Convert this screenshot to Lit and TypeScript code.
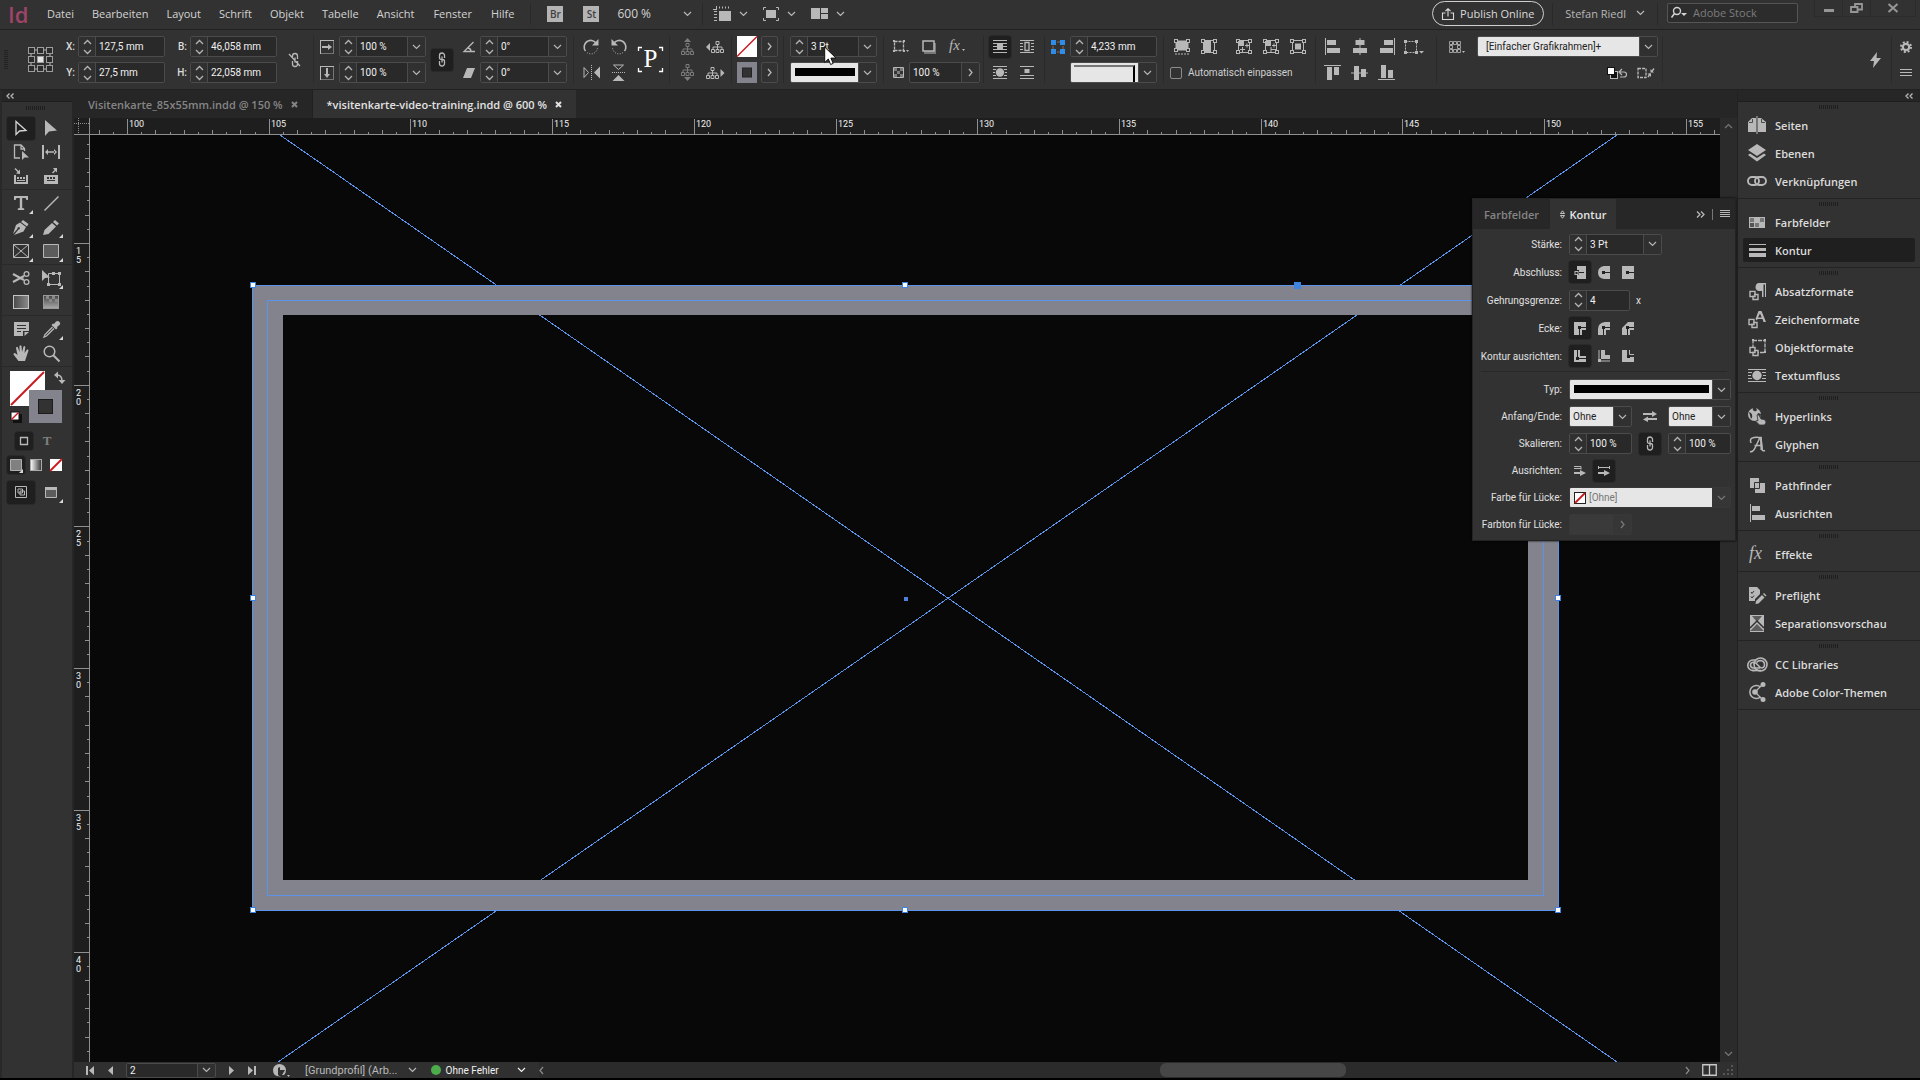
import { LitElement, html, css, svg, nothing } from "lit";
import { customElement } from "lit/decorators.js";

/* ---------- icon set: [width, height, drawing] ---------- */
const node = (x: number, y: number) => svg`<rect x=${x} y=${y} width="3" height="3" fill="#323232" stroke="currentColor"/>`;
const corners = (w: number, h: number) => svg`${node(0.5, 0.5)}${node(w - 3.5, 0.5)}${node(0.5, h - 3.5)}${node(w - 3.5, h - 3.5)}`;
const lines = (w: number, ys: number[]) => ys.map((y) => svg`<rect x="0" y=${y} width=${w} height="1"/>`);

const ICONS: Record<string, [number, number, unknown]> = {
  chevron: [9, 6, svg`<path d="M1 1l3.5 3.500L8 1" fill="none" stroke="currentColor" stroke-width="1.200"/>`],
  chevronRight: [5, 9, svg`<path d="M1 1l3 3.500L1 8" fill="none" stroke="currentColor" stroke-width="1.300"/>`],
  chevronLeft: [5, 9, svg`<path d="M4 1L1 4.500L4 8" fill="none" stroke="currentColor" stroke-width="1.300"/>`],
  chevronUp: [9, 6, svg`<path d="M1 5l3.500-3.500L8 5" fill="none" stroke="currentColor" stroke-width="1.200"/>`],
  spin: [9, 16, svg`<path d="M1 5l3.500-3.500L8 5M1 11l3.500 3.500L8 11" fill="none" stroke="currentColor" stroke-width="1.300"/>`],
  collapse: [8, 6, svg`<path d="M3.500.500L1 3l2.500 2.500M7.500.500L5 3l2.500 2.500" fill="none" stroke="currentColor" stroke-width="1.300"/>`],
  expand: [9, 7, svg`<path d="M1 .500L4 3.500 1 6.500M5 .500L8 3.500 5 6.500" fill="none" stroke="currentColor" stroke-width="1.300"/>`],
  close: [7, 7, svg`<path d="M1 1l5 5M6 1L1 6" stroke="currentColor" stroke-width="2"/>`],
  windowClose: [12, 10, svg`<path d="M1.500 1l9 8M10.500 1l-9 8" stroke="currentColor" stroke-width="2"/>`],
  minimize: [10, 10, svg`<rect x="0" y="6" width="10" height="3"/>`],
  restore: [13, 10, svg`<path d="M1 4h6.500v5H1zM5 3.500V1h7v5.500H8" fill="none" stroke="currentColor" stroke-width="1.800"/>`],
  rulerView: [18, 15, svg`<path d="M6 5h12v10H6z"/><path d="M6.500 .500v2M9.500 .500v2M12.500 .500v2M15.500 .500v2M1 5.500h3M1 8.500h3M1 11.500h3M1 14.500h3M3.500 0v4M0 3.500h4" stroke="currentColor" fill="none"/>`],
  screenMode: [16, 14, svg`<path d="M3 3h10v8H3z"/><path d="M.500 3V.500H3M13 .500h2.500V3M15.500 11v2.500H13M3 13.500H.500V11" fill="none" stroke="currentColor"/>`],
  arrange: [17, 11, svg`<path d="M0 0h9v11H0zM10 0h7v5h-7zM10 6h7v5h-7z"/>`],
  share: [12, 12, svg`<path d="M3.500 5H.500v6.500h11V5h-3M6 8.500V1M3.500 3L6 .800 8.500 3" fill="none" stroke="currentColor" stroke-width="1.100"/>`],
  search: [17, 11, svg`<circle cx="6" cy="4" r="3.500" fill="none" stroke="currentColor" stroke-width="1.400"/><path d="M3.500 6.500L.500 10.500" stroke="currentColor" stroke-width="1.600"/><path d="M10 6h6l-3 3z"/>`],
  refPoint: [25, 25, svg`<path d="M3 3h19v19H3z" fill="none" stroke="currentColor" stroke-width="1"/>${[0.5, 9.5, 18.5].map((x) => [0.5, 9.5, 18.5].map((y) => svg`<rect x=${x} y=${y} width="6" height="6" fill=${x === 9.5 && y === 9.5 ? "#e4e4e4" : "#2b2b2b"} stroke="#9d9d9d"/>`))}`],
  unlink: [13, 16, svg`<path d="M4.500 7V4a2.500 2.500 0 0 1 5 0v3M4.500 9v3a2.500 2.500 0 0 0 5 0V9M7 5.500v5M1 2l11 12" fill="none" stroke="currentColor" stroke-width="1.300"/>`],
  link: [8, 15, svg`<path d="M1.500 6V3.500a2.500 2.500 0 0 1 5 0V6M1.500 9v2.500a2.500 2.500 0 0 0 5 0V9M4 4.500v6M1.500 6q0 1.500 2.500 1.500T6.500 9" fill="none" stroke="currentColor" stroke-width="1.300"/>`],
  scaleX: [14, 14, svg`<path d="M.500.500h13v13H.500z" fill="none" stroke="currentColor" stroke-dasharray="1 1"/><path d="M.500 0v14M0 .500h14" stroke="currentColor"/><path d="M2 6h6V4l4 3-4 3V8H2z"/>`],
  scaleY: [14, 14, svg`<path d="M.500.500h13v13H.500z" fill="none" stroke="currentColor" stroke-dasharray="1 1"/><path d="M.500 0v14M0 .500h14" stroke="currentColor"/><path d="M6 2h2v6h2l-3 4-3-4h2z"/>`],
  angle: [12, 12, svg`<path d="M10.500 1L1 10.500h11M5 7q3 .500 3 3.500" fill="none" stroke="currentColor" stroke-width="1.300"/>`],
  shear: [12, 10, svg`<path d="M4 0h8L8 10H0z"/>`],
  rotateCw: [17, 16, svg`<path d="M2.500 12A6.500 6.500 0 0 1 13 4" fill="none" stroke="currentColor" stroke-width="1.600"/><path d="M15.500 0v6.500H9z"/><path d="M4 13.500a6.500 6.500 0 0 0 10.500-5" fill="none" stroke="currentColor" stroke-dasharray="1 1.500"/>`],
  rotateCcw: [17, 16, svg`<path d="M14.500 12A6.500 6.500 0 0 0 4 4" fill="none" stroke="currentColor" stroke-width="1.600"/><path d="M1.500 0v6.500H8z"/><path d="M13 13.500a6.500 6.500 0 0 1-10.500-5" fill="none" stroke="currentColor" stroke-dasharray="1 1.500"/>`],
  flipH: [17, 15, svg`<path d="M1 2.500v10l4.500-5z" fill="none" stroke="currentColor"/><path d="M8.500 0v15" stroke="currentColor" stroke-dasharray="1 1"/><path d="M17 1.500v12l-6-6z"/>`],
  flipV: [13, 17, svg`<path d="M1.500 1h10L6.500 5.500z" fill="none" stroke="currentColor"/><path d="M0 8.500h13" stroke="currentColor" stroke-dasharray="1 1"/><path d="M.500 17h12l-6-6z"/>`],
  pFrame: [25, 25, svg`<path d="M.500 4V.500H4M21 .500h3.500V4M24.500 21v3.500H21M4 24.500H.500V21" fill="none" stroke="#fff" stroke-width="1.300"/><text x="12.500" y="20" text-anchor="middle" class="serif" fill="#fff">P</text>`],
  treeUp: [13, 17, svg`<path d="M3 4l3.500-4L10 4z"/><path d="M5 5.500h3v3H5zM.500 13.500h3v3h-3zM5 13.500h3v3H5zM9.500 13.500h3v3h-3zM6.500 8.500v5M2 13.500V11h9v2.500" fill="none" stroke="currentColor"/>`],
  treeDown: [13, 17, svg`<path d="M3 13l3.500 4L10 13z"/><path d="M5 .500h3v3H5zM.500 8.500h3v3h-3zM5 8.500h3v3H5zM9.500 8.500h3v3h-3zM6.500 3.500v5M2 8.500V6h9v2.500" fill="none" stroke="currentColor"/>`],
  treePrev: [19, 12, svg`<path d="M4 2v8L0 6z"/><path d="M10 .500h3v3h-3zM5.500 8.500h3v3h-3zM10 8.500h3v3h-3zM14.500 8.500h3v3h-3zM11.500 3.500v5M7 8.500V6h9v2.500" fill="none" stroke="currentColor"/>`],
  treeNext: [19, 12, svg`<path d="M14.500 2v8l4-4z"/><path d="M5 .500h3v3H5zM.500 8.500h3v3h-3zM5 8.500h3v3H5zM9.500 8.500h3v3h-3zM6.500 3.500v5M2 8.500V6h9v2.500" fill="none" stroke="currentColor"/>`],
  none: [20, 21, svg`<rect width="20" height="21" fill="#fff"/><path d="M0 20.500L20 .500" stroke="#c8191e" stroke-width="1.500"/>`],
  strokeSwatch: [20, 21, svg`<rect width="20" height="21" fill="#82838c"/><rect x="5.500" y="6" width="9" height="9" fill="#323232" stroke="#222"/>`],
  cornerOpt: [16, 13, svg`<path d="M1.500 1.500h9v9h-9z" fill="none" stroke="currentColor" stroke-width="1.300" stroke-dasharray="3 1"/><path d="M0 0h2v2H0zM10 0h2v2h-2zM0 10h2v2H0zM10 10h2v2h-2zM13 10h3l-1.500 2z"/>`],
  shadow: [14, 14, svg`<rect x="2" y="3" width="12" height="11" fill="#777"/><rect x="1" y="1" width="11" height="10" fill="#323232" stroke="currentColor" stroke-width="1.500"/>`],
  fx: [17, 15, svg`<text x="0" y="11" class="fx">fx</text><path d="M13 10h3l-1.500 2z"/>`],
  checker: [11, 11, svg`<path d="M.500.500h10v10H.500z" fill="none" stroke="currentColor"/><path d="M1 1h3v3H1zM7 1h3v3H7zM4 4h3v3H4zM1 7h3v3H1zM7 7h3v3H7z" fill="#7c7c7c"/>`],
  wrapNone: [14, 14, svg`${lines(14, [0, 3, 6, 9, 12])}<path d="M4 3h6v7H4z"/>`],
  wrapBox: [14, 14, svg`${lines(14, [0, 12])}<path d="M0 3h3v1H0zM0 6h3v1H0zM0 9h3v1H0zM11 3h3v1h-3zM11 6h3v1h-3zM11 9h3v1h-3z"/><path d="M5 2.500h4v8H5z" fill="none" stroke="currentColor" stroke-width="1.300"/>`],
  wrapShape: [14, 14, svg`${lines(14, [0, 12])}<path d="M0 3h3v1H0zM0 6h2v1H0zM0 9h3v1H0zM11 3h3v1h-3zM12 6h2v1h-2zM11 9h3v1h-3z"/><circle cx="7" cy="6.500" r="4.200"/>`],
  wrapJump: [14, 14, svg`${lines(14, [0, 9, 12])}<path d="M4.500 3h5v4h-5z"/>`],
  blueCorners: [14, 14, svg`<path d="M6 2h3M6 12h3M2 6v3M12 6v3" stroke="#8a6a5a"/><path d="M0 0h5v5H0zM9 0h5v5H9zM0 9h5v5H0zM9 9h5v5H9z" fill="#2f8de8"/>`],
  fit1: [16, 16, svg`<path d="M1.500 1.500h13v10h-13z" fill="#b8b8b8"/>${corners(16, 13)}<path d="M1 15h14" stroke="currentColor" stroke-dasharray="2 1"/>`],
  fit2: [16, 15, svg`<path d="M2.500 1.500h11v12h-11z" fill="none" stroke="currentColor"/><path d="M2 1h8v13H2z"/>${corners(16, 15)}`],
  fit3: [16, 15, svg`<path d="M2.500 1.500h11v12h-11z" fill="none" stroke="currentColor"/>${corners(16, 15)}<path d="M2 2h6v5H2z"/><path d="M4 10.500h5M6.500 8v5M9 6.500h4M11 4.500v4" stroke="currentColor"/>`],
  fit4: [16, 15, svg`<path d="M2.500 1.500h11v12h-11z" fill="none" stroke="currentColor"/>${corners(16, 15)}<path d="M2 2h6v5H2z"/><path d="M8 10.500h5M8 8v5M9 6.500h4M11 4.500v4" stroke="currentColor"/>`],
  fit5: [16, 15, svg`<path d="M2.500 1.500h11v12h-11z" fill="none" stroke="currentColor"/>${corners(16, 15)}<path d="M5 4.500h6v6H5z"/>`],
  alignL: [16, 17, svg`<path d="M0 0h1v17H0zM2 2h9v5H2zM2 10h13v5H2z"/>`],
  alignC: [14, 17, svg`<path d="M6.500 0h1v17h-1zM2.500 2h9v5h-9zM0 10h14v5H0z"/>`],
  alignR: [16, 17, svg`<path d="M15 0h1v17h-1zM5 2h9v5H5zM1 10h13v5H1z"/>`],
  alignT: [17, 15, svg`<path d="M0 0h17v1H0zM3 2h5v13H3zM10 2h5v8h-5z"/>`],
  alignM: [17, 14, svg`<path d="M0 6.500h17v1H0zM3 0h5v14H3zM10 3h5v8h-5z"/>`],
  alignB: [17, 15, svg`<path d="M0 14h17v1H0zM3 0h5v13H3zM10 5h5v8h-5z"/>`],
  spacing: [20, 14, svg`<path d="M1.500 1.500h11v11h-11z" fill="none" stroke="currentColor" stroke-dasharray="2 1"/><path d="M0 0h3v3H0zM11 0h3v3h-3zM0 11h3v3H0zM11 11h3v3h-3zM15 11h5l-2.500 2.500z"/>`],
  objStyle: [16, 12, svg`<path d="M2.500 2.500h7v7h-7z" fill="none" stroke="currentColor" stroke-width="1.500"/><path d="M.500.500h3v3h-3zM4.500.500h3v3h-3zM8.500.500h3v3h-3zM.500 8.500h3v3h-3zM8.500 8.500h3v3h-3zM4.500 8.500h3v3h-3zM.500 4.500h3v3h-3zM8.500 4.500h3v3h-3z" fill="#323232" stroke="currentColor" stroke-width=".8"/><path d="M13 10h3l-1.500 2z"/>`],
  clearOver: [20, 12, svg`<rect x="3.500" y="4.500" width="7" height="7" fill="#111" stroke="currentColor"/><rect x=".5" y=".5" width="7" height="7" fill="#fff" stroke="#111"/><path d="M13 5h4q2.500 0 2.500 2.500T17 10h-4M15 2l-3 3 3 3" fill="none" stroke="currentColor" stroke-width="1.200"/>`],
  redefine: [17, 12, svg`<path d="M1 1.500h8v9H1z" fill="none" stroke="currentColor" stroke-width="1.300" stroke-dasharray="3 1"/><path d="M11 10l2.500-3.500M14.500 5L17 1.500" stroke="currentColor" stroke-width="1.300"/><path d="M10.500 6.500h3.500v3.500zM13.500 2v3.500H17z"/>`],
  bolt: [11, 16, svg`<path d="M7 0L0 9h4l-1 7 8-10H6.500z"/>`],
  gear: [12, 12, svg`<circle cx="6" cy="6" r="3.200" fill="none" stroke="currentColor" stroke-width="2.200"/><circle cx="6" cy="6" r="5" fill="none" stroke="currentColor" stroke-width="2" stroke-dasharray="2 1.930"/>`],
  menu: [12, 8, svg`${lines(12, [0, 3, 6])}`],
  panelMenu: [10, 8, svg`${lines(10, [0, 2, 4, 6])}`],
  selection: [12, 16, svg`<path d="M1 1.500v13l3.500-3.500L11 10.500z" fill="none" stroke="#d6d6d6" stroke-width="1.300"/>`],
  direct: [12, 16, svg`<path d="M0 0v16l4-4.500 8-1z"/>`],
  pageTool: [16, 16, svg`<path d="M7 14H1.500V1H8l3.500 3.500V7M8 1v4h3.500" fill="none" stroke="currentColor" stroke-width="1.300"/><path d="M9 7v9l2.500-2.500H16z"/>`],
  gap: [18, 14, svg`<path d="M0 0h2v14H0zM16 0h2v14h-2zM3 7l3-3v6zM15 7l-3-3v6zM5 6.300h8v1.400H5z"/>`],
  collect: [14, 16, svg`<path d="M0 7h2v7h10V7h2v9H0z"/><path d="M3 9h2v2H3zM6 9h2v2H6zM9 9h2v2H9zM3 12h8v1H3zM6 6V1.500L4.500 3 1.500 0 .500 1l3 3L2 5.500z"/>`],
  place: [14, 16, svg`<path d="M0 7h14v9H0z"/><path d="M3 9h2v2H3zM6 9h2v2H6zM9 9h2v2H9zM3 12h8v1H3z" fill="#323232"/><path d="M13 0v4.500L11.500 3 9 5.500 8 4.500 10.500 2 9 0z"/>`],
  type: [14, 14, svg`<path d="M0 0h14v4h-1.500L11.500 2H8.200v10l2 .6V14H3.800v-1.400l2-.6V2H2.500L1.500 4H0z"/>`],
  line: [15, 15, svg`<path d="M.500 14.500l14-14" stroke="currentColor" stroke-width="1.500"/>`],
  pen: [16, 15, svg`<path d="M10 0l5.500 4-1.500 2.500-6-4.500zM7 2.500L13 7l-2.500 4.500L1 15l4.500-5.500a1.200 1.200 0 1 0-1-.800L0 14 3 5z"/>`],
  pencil: [16, 15, svg`<path d="M12 0l4 3.500-2 2L10 2zM9 3l4 3.500L5.500 14 0 15l1.500-5z"/>`],
  frame: [16, 14, svg`<path d="M.500.500h15v13H.500zM.500.500l15 13M15.500.500l-15 13" fill="none" stroke="currentColor"/>`],
  rect: [16, 14, svg`<path d="M.500.500h15v13H.500z" fill="#5c5c5c" stroke="currentColor"/>`],
  scissors: [17, 14, svg`<path d="M0 3l11 6M0 11l11-6" stroke="currentColor" stroke-width="2"/><circle cx="13.500" cy="3" r="2.400" fill="none" stroke="currentColor" stroke-width="1.300"/><circle cx="13.500" cy="11" r="2.400" fill="none" stroke="currentColor" stroke-width="1.300"/>`],
  transform: [19, 16, svg`<path d="M6.500 3.500h11v11h-11z" fill="none" stroke="currentColor"/><path d="M5 13h3v3H5zM16 2h3v3h-3zM16 13h3v3h-3zM10 2h3v3h-3z"/><path d="M0 0v11l3-3 5-.5z"/>`],
  gradient: [16, 14, svg`<defs><linearGradient id="g1"><stop offset="0" stop-color="#4a4a4a"/><stop offset="1" stop-color="#8a8a8a"/></linearGradient></defs><rect x=".5" y=".5" width="15" height="13" fill="url(#g1)" stroke="#c4c4c4"/>`],
  feather: [16, 14, svg`<defs><linearGradient id="g2" x2="0" y2="1"><stop offset="0" stop-color="#444"/><stop offset="1" stop-color="#aaa"/></linearGradient></defs><rect x=".5" y=".5" width="15" height="13" fill="url(#g2)" stroke="#999"/><path d="M3 1h3v3H3zM9 1h3v3H9zM6 4h3v3H6zM12 4h3v3h-3z" fill="#888"/>`],
  note: [15, 14, svg`<path d="M0 0h15v9H9v5H0z"/><path d="M3 3.500h9M3 6.500h9M3 9.500h4" stroke="#323232"/><path d="M10.500 10h4.500l-4.500 4z"/>`],
  eyedropper: [17, 17, svg`<path d="M11 3l2-2.500q2-1 3.500.500t0 3L14 6l.500 1-1.500 1.500L8.500 4 10 2.500z"/><path d="M9.500 6L2 13.500l-1 2.500 2.500-1L11 7.500" fill="none" stroke="currentColor" stroke-width="1.300"/>`],
  hand: [17, 17, svg`<path d="M5.500 16L.500 9.500Q0 8 2 8l2.500 2L3 3q0-1.500 1.700-1L6.500 7V1q1-1.500 2 0l.500 6L10.500 1.500q1.300-1 1.800.5L11.500 8 14 4.500q1.500-.500 1.500 1L13 13l-1 3z"/>`],
  zoom: [17, 17, svg`<circle cx="6.500" cy="6.500" r="5.300" fill="none" stroke="currentColor" stroke-width="1.500"/><path d="M10.500 10.500l6 6" stroke="currentColor" stroke-width="2"/>`],
  fillStroke: [72, 60, svg`<rect x="10" y="4" width="35" height="35" fill="#fff"/><path d="M11 38L44 5" stroke="#c8191e" stroke-width="2"/><rect x="29" y="23" width="33" height="33" fill="#82838c"/><rect x="38.500" y="32.500" width="14" height="14" fill="#323232" stroke="#1c1c1c"/><path d="M57 8q5 0 5 6" fill="none" stroke="currentColor" stroke-width="1.500"/><path d="M54 8l4-3.500v7zM58.500 13h7L62 17z"/><rect x="14.500" y="48.500" width="6" height="6" fill="none" stroke="#111" stroke-width="3"/><rect x="11" y="45" width="8" height="8" fill="#fff" stroke="#111"/><path d="M11.500 52.500l7-7" stroke="#c8191e" stroke-width="1.500"/>`],
  box: [8, 8, svg`<path d="M.500.500h7v7h-7z" fill="none" stroke="currentColor" stroke-width="1.300"/>`],
  solid: [12, 12, svg`<path d="M.500.500h11v11H.500z" fill="#808080" stroke="#b0b0b0"/>`],
  grad2: [12, 12, svg`<defs><linearGradient id="g3"><stop offset="0" stop-color="#fff"/><stop offset="1" stop-color="#333"/></linearGradient></defs><rect x=".5" y=".5" width="11" height="11" fill="url(#g3)" stroke="#aaa"/>`],
  noneSmall: [12, 12, svg`<rect width="12" height="12" fill="#fff"/><path d="M0 12L12 0" stroke="#c8191e" stroke-width="1.800"/>`],
  noneTiny: [12, 12, svg`<rect x=".5" y=".5" width="11" height="11" fill="#fff" stroke="#222"/><path d="M1 11L11 1" stroke="#c8191e" stroke-width="1.800"/>`],
  viewNormal: [12, 12, svg`<path d="M.500.500h11v11H.500zM3 3h4.500v4H3zM5 5h4.500v4H5z" fill="none" stroke="currentColor"/>`],
  viewPreview: [12, 11, svg`<path d="M.500.500h11v10H.500z" fill="#5c5c5c" stroke="currentColor"/><path d="M0 0h12v3H0z"/>`],
  pages: [18, 18, svg`<path d="M0 6l4-4h4v14H0zM10 2h3l5 4v10h-8zM8.500 0h1v18h-1z"/><path d="M1 6.500h3.500V3M17 6.500h-3.500V3" fill="none" stroke="#323232" stroke-width=".8"/>`],
  layers: [18, 18, svg`<path d="M9 0l9 6-9 6-9-6zM2 9.500l7 4.500 7-4.500 2 1.500-9 6.500L0 11z"/>`],
  chain: [20, 10, svg`<rect x="1" y="1" width="11" height="8" rx="4" fill="none" stroke="currentColor" stroke-width="1.900"/><rect x="8" y="1" width="11" height="8" rx="4" fill="none" stroke="currentColor" stroke-width="1.900"/>`],
  swatches: [16, 11, svg`<rect width="16" height="11"/><path d="M1 1h4v4H1zM11 1h4v4h-4zM6 6h4v4H6z" fill="#777"/><path d="M1 6h4v4H1z" fill="#555"/>`],
  stroke: [17, 13, svg`<path d="M0 0h17v1H0zM0 4h17v3H0zM0 9h17v4H0z"/>`],
  para: [17, 17, svg`<path d="M9 0h8v14h-1V1.500h-1.500V14H13V8H9.500q-3-1-3-4t2.500-4z"/><path d="M1 8.500h5v5H1zM4 11.500h5v5H4z" fill="#323232" stroke="currentColor" stroke-width="1.400"/><path d="M2 9.500h3v3H2z" fill="#323232"/>`],
  charA: [18, 17, svg`<path d="M10.500 0h3L18 11h-2.500l-1-3h-5L9 9.500 7.500 8zM12 2.500L10 6.500h3.700z"/><path d="M1 8.500h5v5H1zM4 11.500h5v5H4z" fill="#323232" stroke="currentColor" stroke-width="1.400"/><path d="M2 9.500h3v3H2z" fill="#323232"/>`],
  objectF: [17, 17, svg`<path d="M4 1.500h12v12H4z" fill="none" stroke="currentColor" stroke-width="1.300" stroke-dasharray="4 1"/><path d="M3 0h2v2H3zM15 0h2v2h-2zM15 12h2v2h-2z"/><path d="M1 8.500h5v5H1zM4 11.500h5v5H4z" fill="#323232" stroke="currentColor" stroke-width="1.400"/><path d="M2 9.500h3v3H2z" fill="#323232"/>`],
  textwrap: [18, 13, svg`${lines(18, [0, 12])}<path d="M0 3h4v1H0zM0 6h3v1H0zM0 9h4v1H0zM14 3h4v1h-4zM15 6h3v1h-3zM14 9h4v1h-4z"/><circle cx="9" cy="6.500" r="4.700"/>`],
  globe: [18, 17, svg`<circle cx="6.500" cy="6.500" r="6.500"/><path d="M5 0q-1 2 1 3t3-1L8 0zM1 4q2 0 3 2.500T3 11zM10 5l3 1-.5 3L9 8z" fill="#323232"/><path d="M9 7q1.500-.8 2.300.8L13 11l3 .5q2 1 2 3L16.500 17h-5L8 13.500q.5-1.500 2-.7z" stroke="#323232" stroke-width=".8"/>`],
  glyph: [16, 17, svg`<path d="M1 15.500q3 1 5-3.500L11 1.500h1L13 13q.2 2.500 3 1.500M5.500 9.500h7M2 7Q0 2 5 1.500t6 .5" fill="none" stroke="currentColor" stroke-width="1.500"/><path d="M11 1h1.500L14 14h-2.500z"/>`],
  pathfinder: [15, 15, svg`<path d="M0 0h9v5h6v10H5V10H0z"/><path d="M4.500 4.500h5v6h-5z" fill="none" stroke="#323232"/>`],
  dockAlign: [15, 18, svg`<path d="M0 0h1v18H0zM2 2h8v5H2zM2 11h13v5H2z"/>`],
  dockFx: [16, 17, svg`<text x="0" y="13" class="fx big">fx</text>`],
  preflight: [17, 17, svg`<path d="M0 0h8l3 3v4l-5 5v2H0z"/><path d="M2 5l1 1.500L5 4M2 9.500l1 1.500 2-2.500" fill="none" stroke="#323232"/><path d="M7 14l6-6 2.500 2.500-6 6L6.500 17zM14 7l1-1 2.500 2.500-1 1z"/>`],
  separation: [14, 17, svg`<rect width="14" height="17"/><path d="M2 1h10L7 7zM0 16l7-7 7 7z" fill="#5d5d5d"/><path d="M0 13l7-7 7 7" fill="none" stroke="#323232" stroke-width="1.500"/>`],
  cc: [21, 15, svg`<rect x=".8" y="3" width="12" height="10.500" rx="5.200" fill="none" stroke="currentColor" stroke-width="1.600"/><circle cx="13.500" cy="7.500" r="6.500" fill="#323232" stroke="currentColor" stroke-width="1.600"/><path d="M5 13.500h9" stroke="currentColor" stroke-width="1.600"/><path d="M13 11H6.500q-3-.3-3-3t3-2.800q1.500 0 3 1.500l4 4M9.500 5.500q1.500-2 4-2 3.800.3 4 4t-4 3.500" fill="none" stroke="currentColor" stroke-width="1.600"/>`],
  colorThemes: [18, 20, svg`<path d="M12.500 5A6.500 6.500 0 1 0 12.500 15" fill="none" stroke="currentColor" stroke-width="1.500"/><circle cx="7" cy="10" r="2.800"/><path d="M8 9l6-6M8 11l6 6" stroke="currentColor" stroke-width="1.200"/><circle cx="15" cy="2.500" r="2.500"/><circle cx="15" cy="17.500" r="2.500"/>`],
  tabToggle: [5, 9, svg`<path d="M.500 3.500L2.500 .800 4.500 3.500zM.500 5.500L2.500 8.200 4.500 5.500z" fill="none" stroke="currentColor" stroke-width=".8"/>`],
  capButt: [12, 13, svg`<path d="M3 0h9v13H3V9h2V4H3z"/><path d="M4 6.500h6" stroke="#222"/><rect x="1" y="5.500" width="3" height="3" fill="none" stroke="currentColor"/>`],
  capRound: [12, 13, svg`<path d="M6 0h6v13H6Q0 12 0 6.500T6 0z"/><path d="M6 6.500h6" stroke="#222"/><path d="M4 5h3v3H4z" fill="#222"/>`],
  capSquare: [12, 13, svg`<path d="M0 0h12v13H0z"/><path d="M6 6.500h6" stroke="#222"/><path d="M4 5h3v3H4z" fill="#222"/>`],
  joinMiter: [12, 13, svg`<path d="M0 0h12v8H8v5H0z"/><path d="M5.500 13V5.500H12" fill="none" stroke="#222"/><path d="M4 4h3v3H4z" fill="#222"/>`],
  joinRound: [12, 13, svg`<path d="M7 0h5v8H8v5H0V7q0-6 7-7z"/><path d="M5.500 13V5.500H12" fill="none" stroke="#222"/><path d="M4 4h3v3H4z" fill="#222"/>`],
  joinBevel: [12, 13, svg`<path d="M6 0h6v8H8v5H0V6z"/><path d="M5.500 13V5.500H12" fill="none" stroke="#222"/><path d="M4 4h3v3H4z" fill="#222"/>`],
  alignCenter: [12, 12, svg`<path d="M0 0h6v6h6v6H0z"/><path d="M3.500 0v8.500H12" fill="none" stroke="#222"/><path d="M2 7h3v3H2z" fill="#222"/>`],
  alignIn: [12, 12, svg`<path d="M3 0h4v5h5v4H3z"/><path d="M1 0v11h11" fill="none" stroke="currentColor"/><rect x="0" y="9" width="3" height="3"/>`],
  alignOut: [12, 12, svg`<path d="M0 0h5v7h7v5H0z"/><path d="M7.500 0v4.500H12" fill="none" stroke="currentColor"/><path d="M5 5h3v3H5z" fill="#222"/>`],
  swapEnds: [14, 11, svg`<path d="M0 2h9V0l5 3-5 3V4H0zM14 7H5V5.500L0 8.500l5 2.500V9h9z"/>`],
  dashAlign: [12, 10, svg`<path d="M0 .500h7v3M0 2.500h7" fill="none" stroke="currentColor"/><path d="M0 6h6V4l6 3-6 3V8H0z"/>`],
  dashFit: [12, 10, svg`<path d="M0 1.500h11.500M11.500 0v3M.500 0v3" fill="none" stroke="currentColor"/><path d="M0 6h6V4l6 3-6 3V8H0z"/>`],
  first: [9, 9, svg`<path d="M0 0h2v9H0zM8 0v9L3 4.500z"/>`],
  prev: [5, 9, svg`<path d="M5 0v9L0 4.500z"/>`],
  next: [5, 9, svg`<path d="M0 0v9l5-4.500z"/>`],
  last: [9, 9, svg`<path d="M7 0h2v9H7zM1 0v9l5-4.500z"/>`],
  open: [17, 13, svg`<path d="M0 6a6.500 6 0 0 1 13 0q0 3-2 5H9l3-5H7V3L5 4v7q1 1 3 1.500Q0 13 0 6z"/><path d="M14 11h3l-1.500 2z"/>`],
  dot: [10, 10, svg`<circle cx="5" cy="5" r="5" fill="#4cab4a"/>`],
  split: [15, 12, svg`<path d="M.750.750h13.500v10.500H.750zM7.500.500v11" fill="none" stroke="currentColor" stroke-width="1.300"/>`],
  resize: [10, 10, svg`<path d="M8 0h2v2H8zM8 4h2v2H8zM4 4h2v2H4zM0 8h2v2H0zM4 8h2v2H4zM8 8h2v2H8z" fill="#555"/>`],
  pointer: [13, 20, svg`<path d="M.700 1v15.500l3.600-3.500 2.300 5.500 2.600-1.100-2.300-5.300H12z" fill="#fff" stroke="#111"/>`],
};

const icon = (name: string) => {
  const [w, h, body] = ICONS[name];
  return html`<svg class="ico" width=${w} height=${h} viewBox="0 0 ${w} ${h}" fill="currentColor" aria-hidden="true">${body}</svg>`;
};

/* ---------- shared controls ---------- */
const base = css`
  :host, * { box-sizing: border-box; }
  button, input, select { font: inherit; color: inherit; margin: 0; padding: 0; border: 0; background: none; border-radius: 0; outline: 0; }
  button { display: flex; align-items: center; justify-content: center; }
  .ico { display: block; flex: none; overflow: visible; }
  .serif { font: 25px "Liberation Serif", serif; }
  .fx { font: italic 15px "Liberation Serif", serif; }
  .fx.big { font-size: 18px; }
  .field { display: flex; height: 21px; width: 87px; border: 1px solid #4b4b4b; border-radius: 2px; background: #292929; color: #f0f0f0; font: 10px Roboto, sans-serif; overflow: hidden; align-items: stretch; }
  .field input { flex: 1; min-width: 0; padding-left: 3px; }
  .field .spin { width: 17px; flex: none; border-right: 1px solid #4b4b4b; background: #303030; color: #b4b4b4; }
  .field .drop { width: 18px; flex: none; border-left: 1px solid #4b4b4b; background: #303030; color: #b4b4b4; display: flex; align-items: center; justify-content: center; }
  .field select { flex: 1; min-width: 0; appearance: none; background: #e6e6e6; color: #222; padding-left: 3px; }
  .field .line { flex: 1; background: #e6e6e6; padding: 5px 3px 5px 4px; display: block; }
  .field .line::before { content: ""; display: block; height: 8px; background: #000; }
  .field.disabled { border-color: #383838; background: #3a3a3a; }
  .field.disabled .drop { border: 0; background: #363636; color: #777; }
  .tool { width: 22px; height: 22px; color: #b8b8b8; border-radius: 3px; flex: none; }
  .tool.on { background: #1f1f1f; box-shadow: 0 0 0 1px #2a2a2a; }
`;

const field = (label: string, value: string, o: { spin?: boolean; drop?: string; cls?: string } = {}) => html`
  <div class="field ${o.cls ?? ""}">
    ${o.spin ? html`<button class="spin" aria-label="${label} ändern">${icon("spin")}</button>` : nothing}
    <input aria-label=${label} .value=${value} />
    ${o.drop ? html`<button class="drop" aria-label="${label} wählen">${icon(o.drop)}</button>` : nothing}
  </div>`;

const choice = (label: string, value: string, cls = "") => html`
  <label class="field ${cls}"><select aria-label=${label}><option>${value}</option></select><span class="drop">${icon("chevron")}</span></label>`;

const lineType = (label: string, cls = "") => html`
  <button class="field ${cls}" aria-label=${label}><span class="line"></span><span class="drop">${icon("chevron")}</span></button>`;

const tool = (name: string, label: string, on = false, cls = "") => html`
  <button class="tool ${cls} ${on ? "on" : ""}" aria-label=${label}>${icon(name)}</button>`;

/* ---------- menu bar ---------- */
@customElement("menu-bar")
class MenuBar extends LitElement {
  static styles = [base, css`
    :host { display: flex; height: 30px; background: #323232; border-bottom: 1px solid #212121; color: #d2d2d2; align-items: center; padding-bottom: 2px; }
    .logo { width: 47px; padding-left: 8px; font: 22px/28px "Open Sans", sans-serif; font-weight: 600; color: #9d4468; }
    nav { display: flex; gap: 18px; }
    nav a:nth-last-child(-n+2) { padding-left: 1px; }
    a { color: inherit; text-decoration: none; }
    .sep { width: 1px; height: 22px; background: #292929; }
    .badge { width: 16px; height: 16px; background: #b4b4b4; color: #404040; font-size: 10px; font-weight: 600; margin-left: 20px; }
    .sep + .badge { margin-left: 16px; }
    nav + .sep { margin-left: 16px; }
    .zoom { width: 66px; margin-left: 18px; font-size: 12px; }
    .chev { margin-right: 10px; color: #b8b8b8; }
    .view { margin-left: 10px; gap: 8px; color: #b8b8b8; margin-right: 5px; }
    .space { flex: 1; }
    .publish { height: 25px; width: 112px; border: 1px solid #cfcfcf; border-radius: 13px; gap: 6px; color: #dadada; }
    .publish + .sep { margin-left: 8px; }
    .user { gap: 10px; padding: 0 12px 1px; color: #b8b8b8; }
    .search { display: flex; align-items: center; width: 131px; height: 20px; border: 1px solid #555; border-radius: 2px; background: #2c2c2c; margin: 0 16px 2px 9px; padding-left: 3px; gap: 5px; }
    .search input { flex: 1; min-width: 0; }
    .search input::placeholder { color: #7c7c7c; opacity: 1; }
    .win { display: flex; height: 17px; align-self: flex-start; border: 1px solid #2b2b2b; border-top: 0; color: #969696; margin-right: 4px; }
    .win button { width: 28px; border-right: 1px solid #2b2b2b; }
    .win button:last-child { width: 44px; border: 0; }
  `];
  render() {
    return html`
      <span class="logo">Id</span>
      <nav>${["Datei", "Bearbeiten", "Layout", "Schrift", "Objekt", "Tabelle", "Ansicht", "Fenster", "Hilfe"].map((m) => html`<a href="#">${m}</a>`)}</nav>
      <span class="sep"></span>
      <button class="badge">Br</button><button class="badge">St</button>
      <input class="zoom" aria-label="Zoomstufe" .value=${"600 %"} />
      <button class="chev" aria-label="Zoomstufe wählen">${icon("chevron")}</button>
      <span class="sep"></span>
      ${[["rulerView", "Anzeigeoptionen"], ["screenMode", "Bildschirmmodus"], ["arrange", "Dokumente anordnen"]].map(([i, l]) => html`<button class="view" aria-label=${l}>${icon(i)}${icon("chevron")}</button>`)}
      <span class="space"></span>
      <button class="publish">${icon("share")}Publish Online</button>
      <span class="sep"></span>
      <button class="user">Stefan Riedl ${icon("chevron")}</button>
      <span class="sep"></span>
      <label class="search">${icon("search")}<input aria-label="Adobe Stock durchsuchen" placeholder="Adobe Stock" /></label>
      <div class="win">
        <button aria-label="Minimieren">${icon("minimize")}</button>
        <button aria-label="Wiederherstellen">${icon("restore")}</button>
        <button aria-label="Schließen">${icon("windowClose")}</button>
      </div>`;
  }
}

/* ---------- control bar ---------- */
@customElement("control-bar")
class ControlBar extends LitElement {
  static styles = [base, css`
    :host { display: flex; height: 60px; padding: 6px 0; background: #323232; border-bottom: 1px solid #212121; color: #b8b8b8; position: relative; overflow: hidden; }
    .grp { display: flex; align-items: center; height: 47px; border-right: 1px solid #2a2a2a; padding: 0 6px; flex: none; }
    .col { display: grid; grid-auto-rows: 21px; row-gap: 5px; align-items: center; justify-items: center; }
    .grip { width: 4px; height: 20px; background: repeating-linear-gradient(#222 0 1px, transparent 1px 2px); }
    .row { display: flex; align-items: center; }
    .row.cells > * { width: 27px; }
    .lbl { color: #dcdcdc; font: 500 10px Roboto, sans-serif; width: 14px; margin: 0 3px 0 8px; text-align: right; }
    .pos { padding: 0 12px 0 4px; }
    .pos .grip { margin-right: 20px; }
    .pos .tool { width: 14px; margin-left: 10px; }
    .scale { gap: 5px; }
    .scale .angle { margin-left: 5px; width: 12px; }
    .turn { padding: 0 6px 0 9px; }
    .turn .two { grid-template-columns: 17px 17px; column-gap: 10px; margin-right: 11px; }
    .tree { grid-template-columns: 15px 20px; column-gap: 10px; }
    .trees { padding: 0 6px 0 10px; }
    .dim { opacity: .55; }
    .fill { padding: 0 5px; }
    .swatches { grid-template-columns: 20px 17px; column-gap: 4px; }
    .more { width: 17px; height: 21px; border: 1px solid #4b4b4b; border-radius: 2px; }
    .fxs { padding: 0 3px 0 9px; }
    .fxs .row { gap: 13px; }
    .fxs .row.second { gap: 5px; }
    .fxs .col { justify-items: start; }
    .w70 { width: 71px; }
    .wrap { padding: 0 6px 0 5px; }
    .wrap .col { grid-template-columns: 22px 22px; column-gap: 5px; }
    .corner .col { grid-template-columns: 14px 87px; column-gap: 5px; }
    .stack .line { padding: 2px 3px; }
    .stack .line::before { background: #e6e6e6; height: 15px; border-top: 2px solid #777; border-right: 2px solid #000; }
    .fit { padding: 0 4px; width: 152px; }
    .fit .col { justify-items: start; }
    .fit .push { margin-left: 8px; }
    .auto { display: flex; align-items: center; gap: 6px; font: 10px Roboto, sans-serif; color: #cfcfcf; padding-left: 2px; }
    .auto input { appearance: none; width: 12px; height: 12px; border: 1px solid #8c8c8c; border-radius: 2px; }
    .align { padding: 0 3px; width: 121px; }
    .align .col { justify-items: start; }
    .obj { padding: 0 4px 0 12px; }
    .obj .col { justify-items: end; }
    .obj .row { gap: 12px; }
    .obj .row.second { gap: 10px; padding-right: 4px; }
    .w181 { width: 181px; }
    .w181 select { padding-left: 8px; }
    .space { flex: 1; }
    .end { padding: 0 8px; }
    .bolt { padding-right: 10px; }
    .last { border: 0; }
    .pointer { position: absolute; left: 824px; top: 16px; }
  `];
  render() {
    return html`
      <div class="grp pos">
        <span class="grip"></span>${icon("refPoint")}
        <div class="col"><span class="lbl">X:</span><span class="lbl">Y:</span></div>
        <div class="col">${field("X", "127,5 mm", { spin: true })}${field("Y", "27,5 mm", { spin: true })}</div>
        <div class="col"><span class="lbl">B:</span><span class="lbl">H:</span></div>
        <div class="col">${field("B", "46,058 mm", { spin: true })}${field("H", "22,058 mm", { spin: true })}</div>
        ${tool("unlink", "Proportionen beibehalten")}
      </div>
      <div class="grp scale">
        <div class="col">${icon("scaleX")}${icon("scaleY")}</div>
        <div class="col">${field("X-Skalierung", "100 %", { spin: true, drop: "chevron" })}${field("Y-Skalierung", "100 %", { spin: true, drop: "chevron" })}</div>
        ${tool("link", "Skalierung verketten", true)}
        <div class="col angle">${icon("angle")}${icon("shear")}</div>
        <div class="col">${field("Drehwinkel", "0°", { spin: true, drop: "chevron" })}${field("Scherwinkel", "0°", { spin: true, drop: "chevron" })}</div>
      </div>
      <div class="grp turn">
        <div class="col two">${icon("rotateCw")}${icon("rotateCcw")}${icon("flipH")}${icon("flipV")}</div>${icon("pFrame")}
      </div>
      <div class="grp trees">
        <div class="col tree"><span class="dim">${icon("treeUp")}</span>${icon("treePrev")}<span class="dim">${icon("treeDown")}</span>${icon("treeNext")}</div>
      </div>
      <div class="grp fill">
        <div class="col swatches">
          ${icon("none")}<button class="more" aria-label="Fläche">${icon("chevronRight")}</button>
          ${icon("strokeSwatch")}<button class="more" aria-label="Kontur">${icon("chevronRight")}</button>
        </div>
      </div>
      <div class="grp"><div class="col">${field("Konturstärke", "3 Pt", { spin: true, drop: "chevron" })}${lineType("Konturtyp")}</div></div>
      <div class="grp fxs"><div class="col">
        <div class="row">${icon("cornerOpt")}${icon("shadow")}${icon("fx")}</div>
        <div class="row second">${icon("checker")}${field("Deckkraft", "100 %", { drop: "chevronRight", cls: "w70" })}</div>
      </div></div>
      <div class="grp wrap"><div class="col">
        ${tool("wrapNone", "Kein Textumfluss", true)}${tool("wrapBox", "Umfließen der Bounding Box")}${tool("wrapShape", "Konturenführung")}${tool("wrapJump", "Objekt überspringen")}
      </div></div>
      <div class="grp corner"><div class="col">
        ${icon("blueCorners")}${field("Eckenradius", "4,233 mm", { spin: true })}<span></span>${lineType("Eckenform", "stack")}
      </div></div>
      <div class="grp fit"><div class="col">
        <div class="row cells">${tool("fit1", "Rahmen proportional füllen")}${tool("fit2", "Inhalt proportional anpassen")}${tool("fit3", "Inhalt an Rahmen anpassen", false, "push")}${tool("fit4", "Rahmen an Inhalt anpassen")}${tool("fit5", "Inhalt zentrieren")}</div>
        <label class="auto"><input type="checkbox" />Automatisch einpassen</label>
      </div></div>
      <div class="grp align"><div class="col">
        <div class="row cells">${tool("alignL", "Links ausrichten")}${tool("alignC", "Mitte ausrichten")}${tool("alignR", "Rechts ausrichten")}${tool("spacing", "Ausrichten an")}</div>
        <div class="row cells">${tool("alignT", "Oben ausrichten")}${tool("alignM", "Vertikal zentrieren")}${tool("alignB", "Unten ausrichten")}</div>
      </div></div>
      <div class="grp obj"><div class="col">
        <div class="row">${icon("objStyle")}${choice("Objektformat", "[Einfacher Grafikrahmen]+", "w181")}</div>
        <div class="row second">${icon("clearOver")}${icon("redefine")}</div>
      </div></div>
      <span class="space"></span>
      <div class="grp end bolt">${icon("bolt")}</div>
      <div class="grp end last"><div class="col">${icon("gear")}${icon("menu")}</div></div>
      <span class="pointer">${icon("pointer")}</span>`;
  }
}

/* ---------- toolbox ---------- */
@customElement("tool-box")
class ToolBox extends LitElement {
  static styles = [base, css`
    :host { display: flex; flex-direction: column; width: 72px; background: #323232; border-left: 2px solid #292929; color: #b8b8b8; }
    .head { height: 12px; background: #262626; border-bottom: 1px solid #1e1e1e; padding: 3px 4px; color: #b8b8b8; }
    .grip { width: 20px; height: 4px; margin: 4px 0 5px 24px; background: repeating-linear-gradient(90deg, #1f1f1f 0 1px, transparent 1px 2px); }
    .set { display: grid; grid-template-columns: 28px 28px; column-gap: 2px; grid-auto-rows: 24px; padding: 1px 5px; border-bottom: 1px solid #292929; align-items: center; }
    .tool { width: 28px; height: 23px; position: relative; }
    .fly::after { content: ""; position: absolute; right: 2px; bottom: 1px; border: 2px solid; border-color: transparent #d8d8d8 #d8d8d8 transparent; }
    .fills { margin-left: -2px; }
    .row { display: flex; align-items: center; height: 24px; padding-left: 5px; }
    .row .tool { width: 18px; height: 18px; }
    .fmt { padding-left: 13px; gap: 5px; margin-top: 2px; }
    .fmt .t { width: 18px; font: bold 13px "Liberation Serif", serif; color: #808080; }
    .apply { gap: 2px; }
    .view { gap: 2px; margin-top: 3px; }
    .view .tool { width: 28px; height: 23px; }
  `];
  render() {
    const sets: [string, string, boolean?][][] = [
      [["selection", "Auswahl"], ["direct", "Direktauswahl"], ["pageTool", "Seite"], ["gap", "Lücke"], ["collect", "Inhaltsaufnahme"], ["place", "Inhaltsplatzierung"]],
      [["type", "Text", true], ["line", "Linienzeichner"], ["pen", "Zeichenstift", true], ["pencil", "Buntstift", true], ["frame", "Rechteckrahmen", true], ["rect", "Rechteck", true]],
      [["scissors", "Schere"], ["transform", "Frei transformieren", true], ["gradient", "Verlaufsfarbfeld"], ["feather", "Weiche Verlaufskante"]],
      [["note", "Notiz"], ["eyedropper", "Pipette", true], ["hand", "Hand"], ["zoom", "Zoom"]],
    ];
    return html`
      <div class="head">${icon("collapse")}</div>
      <div class="grip"></div>
      ${sets.map((s) => html`<div class="set">${s.map(([i, l, fly]) => tool(i, l, i === "selection", fly ? "fly" : ""))}</div>`)}
      <div class="fills">${icon("fillStroke")}</div>
      <div class="row fmt">${tool("box", "Formatierung wirkt sich auf Rahmen aus", true)}<button class="t" aria-label="Formatierung wirkt sich auf Text aus">T</button></div>
      <div class="row apply">${tool("solid", "Farbe anwenden", true, "fly")}${tool("grad2", "Verlauf anwenden")}${tool("noneSmall", "Keine anwenden")}</div>
      <div class="row view">${tool("viewNormal", "Normal", true)}${tool("viewPreview", "Vorschau", false, "fly")}</div>`;
  }
}

/* ---------- document window ---------- */
const STEP = 1417 / 50; // pixels per millimetre at this zoom

@customElement("document-view")
class DocumentView extends LitElement {
  static styles = [base, css`
    :host { display: flex; flex-direction: column; flex: 1; min-width: 0; background: #262626; padding-left: 2px; }
    .tabs { display: flex; height: 28px; }
    .tab { display: flex; align-items: center; gap: 8px; padding: 1px 14px 0 14px; font-weight: 600; color: #858585; white-space: nowrap; }
    .tab.on { background: #323232; color: #e2e2e2; }
    .tab:first-child { border-right: 1px solid #202020; }
    .area { flex: 1; min-height: 0; display: grid; grid-template: 17px minmax(0, 1fr) / 16px minmax(0, 1fr) 17px; }
    .area > svg { display: block; width: 100%; height: 100%; overflow: hidden; }
    .rule { background: #1e1e1e; }
    .rule text { font: 9px Roboto, sans-serif; fill: #f0f0f0; }
    .tick { stroke: #8f8f8f; stroke-width: 1; shape-rendering: crispEdges; }
    .page { background: #080808; grid-column: 2; grid-row: 2; }
    .guide { stroke: #5b93ea; fill: none; shape-rendering: crispEdges; }
    .band { fill: #82838c; }
    .handle { fill: #fff; stroke: #3f83e0; }
    .scroll { grid-column: 3; grid-row: 1 / 3; background: #2b2b2b; color: #777; display: flex; flex-direction: column; justify-content: space-between; align-items: center; padding: 5px 0; }
    .status { display: flex; height: 16px; background: #303030; align-items: center; color: #b8b8b8; font: 10px Roboto, sans-serif; }
    .status .field { width: 90px; height: 15px; }
    .status .nav { margin-left: 13px; }
    .nav + .field { margin-left: 13px; }
    .first { margin-left: 12px; }
    .open { margin: 0 15px 0 17px; }
    .profile { gap: 10px; font-size: 11px; }
    .errors { gap: 5px; margin: 0 13px 0 14px; color: #f0f0f0; }
    .errors .ico + span + .ico { margin-left: 13px; }
    .bar { flex: 1; display: grid; grid-template-columns: 618fr 186fr 342fr; height: 16px; background: #2b2b2b; color: #888; align-items: center; }
    .thumb { height: 14px; border-radius: 6px; background: #464646; }
    .bar .ico:last-child { justify-self: end; }
    .split { margin: 0 6px 0 12px; color: #c8c8c8; }
    .grab { margin-right: 4px; }
  `];
  private ruler(vertical: boolean) {
    const start = vertical ? 243 - 135 : 127 - 90;
    const first = vertical ? 15 : 100;
    const count = vertical ? 57 : 114;
    const out: unknown[] = [];
    for (let i = -7; i <= count; i++) {
      const p = Math.round(start + (i * STEP) / 2) + 0.5;
      const len = i % 10 === 0 ? 16 : i % 2 === 0 ? 5 : 3;
      const n = String(first + i / 2);
      out.push(vertical
        ? svg`<line class="tick" x1=${16 - len} x2="16" y1=${p} y2=${p} />`
        : svg`<line class="tick" x1=${p} x2=${p} y1=${17 - len} y2="17" />`);
      if (i % 10 === 0) {
        out.push(vertical
          ? svg`<text x="2" y=${p + 10}>${n[0]}</text><text x="2" y=${p + 19}>${n[1]}</text>`
          : svg`<text x=${p + 1.5} y="9">${n}</text>`);
      }
    }
    return out;
  }
  render() {
    const handles = [[163, 150], [815, 150], [163, 463], [1468, 463], [163, 775], [815, 775], [1468, 775]];
    return html`
      <div class="tabs" role="tablist">
        <button class="tab" role="tab">Visitenkarte_85x55mm.indd @ 150 % ${icon("close")}</button>
        <button class="tab on" role="tab" aria-selected="true">*visitenkarte-video-training.indd @ 600 % ${icon("close")}</button>
      </div>
      <div class="area">
        <svg class="rule"><path d="M4.500 0v16M0 5.500h16" stroke="#8f8f8f" stroke-dasharray="1 1" /><path d="M15.500 0v17M0 16.500h16" stroke="#8f8f8f" /></svg>
        <svg class="rule">${this.ruler(false)}<line class="tick" x1="0" x2="100%" y1="16.500" y2="16.500" /></svg>
        <svg class="rule">${this.ruler(true)}<line class="tick" y1="0" y2="100%" x1="15.500" x2="15.500" /></svg>
        <svg class="page">
          <path class="guide" d="M190 0L1527 927M1527 0L188 927" />
          <path class="band" fill-rule="evenodd" d="M162 150h1306v626H162zM193 180v565h1245V180z" />
          <path class="guide" d="M162.500 150.500h1306v625h-1306zM177.500 165.500h1276v595h-1276z" />
          ${handles.map(([x, y]) => svg`<rect class="handle" x=${x - 2.5} y=${y - 2.5} width="5" height="5" />`)}
          <rect x="1204" y="147" width="7" height="7" fill="#3f83e0" />
          <rect x="814" y="462" width="4" height="4" fill="#4f7fdc" />
        </svg>
        <div class="scroll">${icon("chevronUp")}${icon("chevron")}</div>
      </div>
      <div class="status">
        <button class="first" aria-label="Erste Seite">${icon("first")}</button>
        <button class="nav" aria-label="Vorherige Seite">${icon("prev")}</button>
        ${field("Seite", "2", { drop: "chevron" })}
        <button class="nav" aria-label="Nächste Seite">${icon("next")}</button>
        <button class="nav" aria-label="Letzte Seite">${icon("last")}</button>
        <button class="open" aria-label="Öffnen">${icon("open")}</button>
        <button class="profile">[Grundprofil] (Arb... ${icon("chevron")}</button>
        <button class="errors">${icon("dot")}<span>Ohne Fehler</span>${icon("chevron")}</button>
        <div class="bar">${icon("chevronLeft")}<span class="thumb"></span>${icon("chevronRight")}</div>
        <button class="split" aria-label="Layoutansicht teilen">${icon("split")}</button><span class="grab">${icon("resize")}</span>
      </div>`;
  }
}

/* ---------- floating stroke panel ---------- */
@customElement("stroke-panel")
class StrokePanel extends LitElement {
  static styles = [base, css`
    :host { display: block; width: 264px; background: #323232; border: 1px solid #232323; box-shadow: 0 0 2px #000; color: #e0e0e0; font: 10px Roboto, sans-serif; }
    .tabs { display: flex; height: 30px; background: #272727; font: 600 11px "Open Sans", sans-serif; align-items: stretch; }
    .tab { width: 77px; color: #848484; }
    .tab.on { width: 66px; background: #323232; color: #e4e4e4; gap: 5px; }
    .tools { margin-left: auto; display: flex; align-items: center; gap: 7px; padding-right: 5px; color: #b8b8b8; }
    .bar { width: 1px; height: 11px; background: #777; }
    .form { display: grid; grid-auto-rows: 28px; padding-top: 1px; }
    .form.low { grid-auto-rows: 27px; margin: 1px 0 0; padding: 5px 0 2px; position: relative; }
    .form.low::before { content: ""; position: absolute; top: 0; left: 8px; right: 8px; border-top: 1px solid #292929; }
    .row { display: grid; grid-template-columns: 89px 1fr; column-gap: 7px; align-items: center; }
    .name { text-align: right; white-space: nowrap; }
    .ctl { display: flex; align-items: center; gap: 2px; padding-right: 4px; }
    .ctl > .mid { margin: 0 5px; }
    .ctl > .unit { margin-left: 4px; }
    .w93 { width: 93px; }
    .w61 { width: 61px; }
    .w63 { width: 63px; }
    .full { width: 162px; }
    .chip { display: flex; align-items: center; padding-left: 4px; background: #e6e6e6; }
    .disabled select { color: #777; opacity: 1; }
  `];
  private row(name: string, body: unknown) {
    return html`<div class="row"><span class="name">${name}</span><div class="ctl">${body}</div></div>`;
  }
  render() {
    return html`
      <div class="tabs">
        <button class="tab">Farbfelder</button>
        <button class="tab on">${icon("tabToggle")}Kontur</button>
        <div class="tools">${icon("expand")}<span class="bar"></span>${icon("panelMenu")}</div>
      </div>
      <div class="form">
        ${this.row("Stärke:", field("Stärke", "3 Pt", { spin: true, drop: "chevron", cls: "w93" }))}
        ${this.row("Abschluss:", html`${tool("capButt", "Abgeflacht", true)}${tool("capRound", "Abgerundet")}${tool("capSquare", "Überstehend")}`)}
        ${this.row("Gehrungsgrenze:", html`${field("Gehrungsgrenze", "4", { spin: true, cls: "w61" })}<span class="unit">x</span>`)}
        ${this.row("Ecke:", html`${tool("joinMiter", "Gehrungsecke", true)}${tool("joinRound", "Abgerundete Ecke")}${tool("joinBevel", "Abgeflachte Ecke")}`)}
        ${this.row("Kontur ausrichten:", html`${tool("alignCenter", "Mitte", true)}${tool("alignIn", "Innen")}${tool("alignOut", "Außen")}`)}
      </div>
      <div class="form low">
        ${this.row("Typ:", lineType("Typ", "full"))}
        ${this.row("Anfang/Ende:", html`${choice("Anfang", "Ohne", "w63")}${tool("swapEnds", "Tauschen", false, "mid")}${choice("Ende", "Ohne", "w63")}`)}
        ${this.row("Skalieren:", html`${field("Anfang skalieren", "100 %", { spin: true, cls: "w63" })}${tool("link", "Verketten", true, "mid")}${field("Ende skalieren", "100 %", { spin: true, cls: "w63" })}`)}
        ${this.row("Ausrichten:", html`${tool("dashAlign", "Pfeilspitze verlängern")}${tool("dashFit", "Pfeilspitze am Ende", true)}`)}
        ${this.row("Farbe für Lücke:", html`<label class="field full disabled"><span class="chip">${icon("noneTiny")}</span><select aria-label="Farbe für Lücke" disabled><option>[Ohne]</option></select><span class="drop">${icon("chevron")}</span></label>`)}
        ${this.row("Farbton für Lücke:", html`<div class="field w63 disabled"><input aria-label="Farbton für Lücke" disabled /><span class="drop">${icon("chevronRight")}</span></div>`)}
      </div>`;
  }
}

/* ---------- panel dock ---------- */
@customElement("panel-dock")
class PanelDock extends LitElement {
  static styles = [base, css`
    :host { display: block; width: 183px; background: #323232; border-left: 1px solid #222; color: #b8b8b8; }
    .head { height: 12px; background: #262626; border-bottom: 1px solid #1e1e1e; display: flex; justify-content: flex-end; padding: 3px 7px; }
    .set { border-bottom: 1px solid #232323; padding: 0 5px 3px; display: flex; flex-direction: column; }
    .grip { width: 20px; height: 4px; margin: 3px 0 2px 76px; background: repeating-linear-gradient(90deg, #1f1f1f 0 1px, transparent 1px 2px); }
    .item { height: 24px; margin: 2px 0; justify-content: flex-start; gap: 8px; padding-left: 4px; border-radius: 2px; color: #dcdcdc; font-weight: 600; }
    .item.on { background: #1f1f1f; }
    .pic { width: 20px; display: flex; justify-content: center; color: #b8b8b8; }
  `];
  render() {
    const sets = [
      [["pages", "Seiten"], ["layers", "Ebenen"], ["chain", "Verknüpfungen"]],
      [["swatches", "Farbfelder"], ["stroke", "Kontur"]],
      [["para", "Absatzformate"], ["charA", "Zeichenformate"], ["objectF", "Objektformate"], ["textwrap", "Textumfluss"]],
      [["globe", "Hyperlinks"], ["glyph", "Glyphen"]],
      [["pathfinder", "Pathfinder"], ["dockAlign", "Ausrichten"]],
      [["dockFx", "Effekte"]],
      [["preflight", "Preflight"], ["separation", "Separationsvorschau"]],
      [["cc", "CC Libraries"], ["colorThemes", "Adobe Color-Themen"]],
    ];
    return html`<div class="head">${icon("collapse")}</div>
      ${sets.map((s) => html`<div class="set"><span class="grip"></span>${s.map(([i, l]) => html`
        <button class="item ${l === "Kontur" ? "on" : ""}"><span class="pic">${icon(i)}</span>${l}</button>`)}</div>`)}`;
  }
}

@customElement("app-root")
class AppRoot extends LitElement {
  static styles = css`
    :host { display: flex; flex-direction: column; height: 100vh; background: #323232; font: 11px "Open Sans", sans-serif; color: #d2d2d2; overflow: hidden; }
    main { flex: 1; min-height: 0; display: flex; position: relative; border-bottom: 2px solid #000; }
    stroke-panel { position: absolute; right: 184px; top: 108px; }
  `;
  render() {
    return html`<menu-bar></menu-bar><control-bar></control-bar>
      <main><tool-box></tool-box><document-view></document-view><panel-dock></panel-dock><stroke-panel></stroke-panel></main>`;
  }
}
